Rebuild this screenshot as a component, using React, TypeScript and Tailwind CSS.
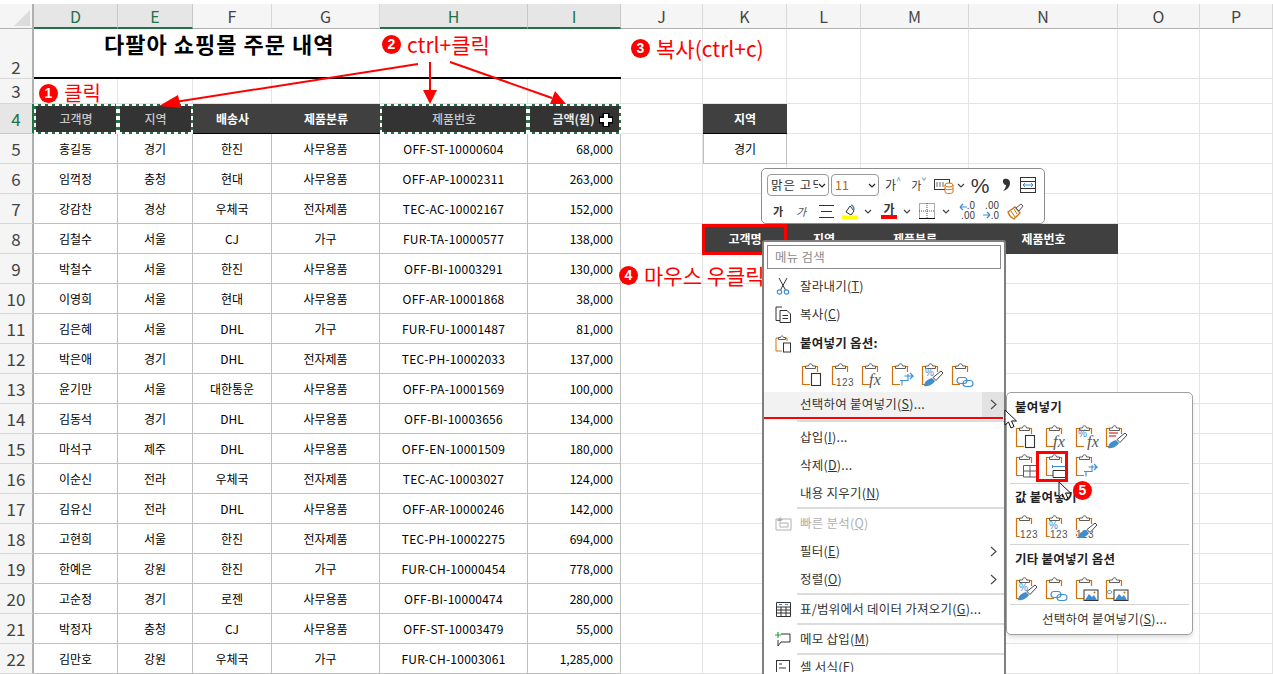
import React from "react";

const DATA = [
  ["홍길동","경기","한진","사무용품","OFF-ST-10000604","68,000"],
  ["임꺽정","충청","현대","사무용품","OFF-AP-10002311","263,000"],
  ["강감찬","경상","우체국","전자제품","TEC-AC-10002167","152,000"],
  ["김철수","서울","CJ","가구","FUR-TA-10000577","138,000"],
  ["박철수","서울","한진","사무용품","OFF-BI-10003291","130,000"],
  ["이영희","서울","현대","사무용품","OFF-AR-10001868","38,000"],
  ["김은혜","서울","DHL","가구","FUR-FU-10001487","81,000"],
  ["박은애","경기","DHL","전자제품","TEC-PH-10002033","137,000"],
  ["윤기만","서울","대한통운","사무용품","OFF-PA-10001569","100,000"],
  ["김동석","경기","DHL","사무용품","OFF-BI-10003656","134,000"],
  ["마석구","제주","DHL","사무용품","OFF-EN-10001509","180,000"],
  ["이순신","전라","우체국","전자제품","TEC-AC-10003027","124,000"],
  ["김유신","전라","DHL","사무용품","OFF-AR-10000246","142,000"],
  ["고현희","서울","한진","전자제품","TEC-PH-10002275","694,000"],
  ["한예은","강원","한진","가구","FUR-CH-10000454","778,000"],
  ["고순정","경기","로젠","사무용품","OFF-BI-10000474","280,000"],
  ["박정자","충청","CJ","사무용품","OFF-ST-10003479","55,000"],
  ["김만호","강원","우체국","가구","FUR-CH-10003061","1,285,000"],
];
const COLS = ["D","E","F","G","H","I","J","K","L","M","N","O","P"];
const SEL = ["D","E","H","I"];

function Ants() {
  return (
    <>
      <span className="absolute -left-[2px] -right-[2px] -top-[2px] h-[2px] z-10 bg-[repeating-linear-gradient(90deg,#ffffff_0_4px,transparent_4px_7px)]" />
      <span className="absolute -left-[2px] -right-[2px] -bottom-[2px] h-[2px] z-10 bg-[repeating-linear-gradient(90deg,#ffffff_0_4px,transparent_4px_7px)]" />
      <span className="absolute -top-[2px] -bottom-[2px] -left-[2px] w-[2px] z-10 bg-[repeating-linear-gradient(0deg,#ffffff_0_4px,transparent_4px_7px)]" />
      <span className="absolute -top-[2px] -bottom-[2px] -right-[2px] w-[2px] z-10 bg-[repeating-linear-gradient(0deg,#ffffff_0_4px,transparent_4px_7px)]" />
    </>
  );
}

function ColHead({ c }: { c: string }) {
  const s = SEL.includes(c);
  return (
    <div className={s
      ? "flex items-center justify-center bg-[#e6e6e6] border-r border-[#c8c8c8] border-b-2 border-b-[#217346] text-[#217346] text-[16px]"
      : "flex items-center justify-center bg-[#f5f5f5] border-r border-[#d8d8d8] border-b border-b-[#b0b0b0] text-[#444] text-[16px]"}>{c}</div>
  );
}

function RowHead({ n, align }: { n: number; align?: string }) {
  const s = n === 4;
  return (
    <div className={`flex ${align || "items-center"} justify-center border-r-2 border-b text-[17px] leading-[22px] ${s ? "bg-[#e6e6e6] text-[#217346] border-r-[#217346] border-b-[#c8c8c8]" : "bg-[#f5f5f5] text-[#444] border-r-[#b0b0b0] border-b-[#d8d8d8]"}`}>{n}</div>
  );
}

const Grid = () => <div className="border-r border-b border-[#e4e4e4]" />;

function Sheet() {
  const rows: React.ReactNode[] = [];
  rows.push(
    <React.Fragment key="r2">
      <RowHead n={2} align="items-end" />
      <div className="col-span-6 border-b-2 border-black flex items-start pl-[70px] text-[22px] tracking-[1px] font-bold text-black leading-[29px] whitespace-nowrap">다팔아 쇼핑몰 주문 내역</div>
      {COLS.slice(6).map((c) => <Grid key={c} />)}
    </React.Fragment>
  );
  rows.push(
    <React.Fragment key="r3">
      <RowHead n={3} />
      {COLS.map((c) => <Grid key={c} />)}
    </React.Fragment>
  );
  const h4 = ["고객명","지역","배송사","제품분류","제품번호","금액(원)"];
  rows.push(
    <React.Fragment key="r4">
      <RowHead n={4} />
      {h4.map((t, i) => {
        const s = SEL.includes(COLS[i]);
        return (
          <div key={t} className={`relative flex items-center justify-center text-[12px] ${s ? `bg-[#333333] border-2 border-[#217346] ${i === 5 ? "text-[#e8e8e8] font-bold pr-[2px]" : "text-[#c8c8c8] font-medium"}` : "bg-[#404040] text-white border-b border-black font-bold"}`}>
            {t}
            {s && <Ants />}
          </div>
        );
      })}
      <Grid /><div className="bg-[#404040] text-white text-[12px] font-bold flex items-center justify-center border-b border-black">지역</div><Grid /><Grid /><Grid /><Grid /><Grid />
    </React.Fragment>
  );
  DATA.forEach((r, idx) => {
    const n = idx + 5;
    rows.push(
      <React.Fragment key={n}>
        <RowHead n={n} />
        {r.map((t, i) => (
          <div key={i} className={`flex items-center whitespace-nowrap border-r border-b border-[#bfbfbf] text-[12px] text-black ${i === 5 ? "justify-end pr-[7px]" : "justify-center"} ${i === 4 ? "tracking-[0.25px]" : ""}`}>{t}</div>
        ))}
        <Grid />
        {n === 5 ? (
          <>
            <div className="flex items-center justify-center border-x border-b border-[#bfbfbf] text-[12px] text-black">경기</div>
            <Grid /><Grid /><Grid />
          </>
        ) : n === 8 ? (
          <>
            <div className="flex items-center justify-center bg-[#404040] text-white text-[12px] font-bold">고객명</div>
            <div className="flex items-center justify-center bg-[#404040] text-white text-[12px] font-bold">지역</div>
            <div className="flex items-center justify-center bg-[#404040] text-white text-[12px] font-bold">제품분류</div>
            <div className="flex items-center justify-center bg-[#404040] text-white text-[12px] font-bold">제품번호</div>
          </>
        ) : (
          <><Grid /><Grid /><Grid /><Grid /></>
        )}
        <Grid /><Grid />
      </React.Fragment>
    );
  });
  return (
    <div className="grid grid-cols-[34px_84px_75px_79px_108px_148px_93px_82px_84px_74px_108px_149px_82px_73px] grid-rows-[4px_25px_50px_25px_30px_repeat(18,30px)] w-[1273px] h-[674px] overflow-hidden bg-white">
      <div className="col-span-14 bg-white" />
      <div className="relative bg-[#f5f5f5] border-r-2 border-b border-r-[#b0b0b0] border-b-[#b0b0b0]">
        <span className="absolute right-[2px] bottom-[2px] w-0 h-0 border-l-[16px] border-l-transparent border-b-[16px] border-b-[#dcdcdc]" />
      </div>
      {COLS.map((c) => <ColHead key={c} c={c} />)}
      {rows}
    </div>
  );
}

const OR = "#d2700f";
const GR = "#5c5c5c";
const BL = "#3f8fd0";

function Clip({ children }: { children?: React.ReactNode }) {
  return (
    <svg width="24" height="26" viewBox="0 0 24 26" fill="none" className="block">
      <path d="M5.5 4.5H1.5V22.5H9" stroke={OR} strokeWidth="1.2" />
      <path d="M14 4.5H16.5V10" stroke={OR} strokeWidth="1.2" />
      <path d="M4.5 6.5V4H7.5C7.5 1 11.5 1 11.5 4H14.5V6.5Z" stroke={GR} strokeWidth="1" fill="#fff" />
      {children}
    </svg>
  );
}
const PDoc = () => <rect x="10.5" y="11.5" width="9" height="12" fill="#fff" stroke="#333" strokeWidth="1.1" />;
const P123 = ({ x = 5 }: { x?: number }) => <text x={x} y="24" fontSize="10" fill="#555" fontFamily="'Liberation Sans',sans-serif" letterSpacing="0.5" paintOrder="stroke" stroke="#fff" strokeWidth="2">123</text>;
const PFx = ({ x = 8 }: { x?: number }) => <text x={x} y="23" fontSize="16" fill="#555" fontStyle="italic" fontFamily="'Liberation Serif',serif">fx</text>;
const PPct = ({ x = 4, y = 14 }: { x?: number; y?: number }) => <text x={x} y={y} fontSize="10" fill={BL} fontFamily="'Liberation Sans',sans-serif">%</text>;
const PArrow = () => <path d="M9 18.5H17V12M13.5 14H22L19 11M22 14L19 17M11 18.5V23.5" stroke={BL} strokeWidth="1.1" fill="none" />;
const PBrush = () => (
  <g>
    <path d="M3 24C4 18 8 17 11 16L14 19C12 22 8 25 3 24Z" fill={BL} />
    <path d="M12 15.5L20 9L22 11L15 18.5Z" fill="#fff" stroke="#444" strokeWidth="1" />
  </g>
);
const PLink = () => (
  <g stroke={BL} strokeWidth="1.1" fill="none">
    <rect x="6" y="15.5" width="10" height="6" rx="3" fill="#fff" />
    <rect x="12" y="18.5" width="10" height="6" rx="3" />
  </g>
);
const PGrid = () => <path d="M8.5 12.5H21.5V24H8.5ZM15 12.5V24M8.5 18H21.5" stroke={GR} strokeWidth="1" fill="#fff" />;
const PWidth = () => (
  <g fill="#fff" stroke="#333" strokeWidth="1">
    <path d="M8 17.5H21V24.5H8Z" />
    <path d="M7.5 12V15M21.5 12V15M7.5 13.5H21.5" stroke={BL} />
  </g>
);
const PImg = () => (
  <g>
    <rect x="9" y="14" width="14" height="10.5" fill="#fff" stroke="#333" strokeWidth="1" />
    <path d="M10 24L14 18L17 21L19 19L22 24Z" fill={BL} />
    <circle cx="19.5" cy="16.5" r="1" fill={OR} />
  </g>
);

function Row({ children, className }: { children: React.ReactNode; className?: string }) {
  return <div className={`flex items-center ${className || ""}`}>{children}</div>;
}

function Cell({ children, w }: { children: React.ReactNode; w: string }) {
  return <div className={`flex justify-center items-center ${w}`}>{children}</div>;
}

const Chev = ({ big }: { big?: boolean }) => (
  <svg width="8" height="5" viewBox="0 0 8 5" fill="none" className="block shrink-0"><path d="M1 1L4 4L7 1" stroke={big ? "#222" : "#444"} strokeWidth="1.2" /></svg>
);

function Toolbar() {
  return (
    <div className="absolute left-[761px] top-[168px] w-[284px] h-[56px] bg-white border border-[#8c8c8c] rounded-[5px] z-20 pl-[5px] pt-[5px] text-[12px] text-[#333]">
      <Row className="h-[22px]">
        <div className="w-[62px] h-[22px] border border-[#9a9a9a] rounded-[4px] flex items-center pl-[3px] justify-between pr-[2px] overflow-hidden">
          <span className="text-[12.5px] tracking-[1px] whitespace-nowrap overflow-hidden w-[47px]">맑은 고딕</span><Chev big />
        </div>
        <div className="ml-[2px] w-[48px] h-[22px] border border-[#9a9a9a] rounded-[4px] flex items-center pl-[3px] justify-between pr-[2px] text-[#b86a10]">
          <span className="text-[12.5px]">11</span><Chev big />
        </div>
        <Cell w="w-[26px] ml-[1px]"><span className="text-[12px] flex items-start">가<span className="text-[#3f8fd0] text-[9px] leading-[10px]">^</span></span></Cell>
        <Cell w="w-[26px]"><span className="text-[11px] flex items-start">가<span className="text-[#3f8fd0] text-[9px] leading-[10px]">ˇ</span></span></Cell>
        <Cell w="w-[24px]">
          <svg width="20" height="18" viewBox="0 0 20 18" fill="none">
            <rect x="0.5" y="3.5" width="15" height="10" stroke="#333" />
            <path d="M3 6V11M6 6V11M9 6V11" stroke="#666" />
            <path d="M11 9V16C11 18 19 18 19 16V9M11 12.5C11 14 19 14 19 12.5" stroke={OR} fill="#fff" />
            <ellipse cx="15" cy="9" rx="4" ry="2" fill="#fff" stroke={OR} />
          </svg>
        </Cell>
        <Cell w="w-[10px]"><Chev /></Cell>
        <Cell w="w-[28px]"><span className="text-[21px] leading-none text-[#333] font-['Liberation_Sans']">%</span></Cell>
        <Cell w="w-[24px]">
          <svg width="10" height="14" viewBox="0 0 10 14" fill="none"><path d="M3 1C7 0 9 2 9 5C9 9 6 12 2 13C4 11 5 9 5 7C2 7 1 2 3 1Z" fill="#333" /></svg>
        </Cell>
        <Cell w="w-[20px]">
          <svg width="16" height="16" viewBox="0 0 16 16" fill="none">
            <rect x="0.5" y="0.5" width="15" height="15" stroke="#333" />
            <path d="M0 4.5H16M0 11.5H16" stroke="#333" />
            <path d="M3 8H13M3 8L5 6M3 8L5 10M13 8L11 6M13 8L11 10" stroke={BL} />
          </svg>
        </Cell>
      </Row>
      <Row className="h-[26px] mt-[2px]">
        <Cell w="w-[22px]"><span className="font-bold text-[11px]">가</span></Cell>
        <Cell w="w-[24px]"><span className="italic text-[11px] text-[#555]">가</span></Cell>
        <Cell w="w-[26px]">
          <svg width="15" height="15" viewBox="0 0 15 15" fill="none"><path d="M0 1.5H15M2 7.5H13M0 13.5H15" stroke="#333" /></svg>
        </Cell>
        <Cell w="w-[20px] ml-[1px]">
          <svg width="16" height="16" viewBox="0 0 16 16" fill="none">
            <path d="M4 9L8 3L12 8L9 12Z" stroke="#333" fill="#fff" />
            <path d="M9 2C12 3 12 6 12 7" stroke={BL} strokeWidth="1.5" />
            <rect x="0" y="12.5" width="16" height="3.5" fill="#ffff00" />
          </svg>
        </Cell>
        <Cell w="w-[16px]"><Chev /></Cell>
        <Cell w="w-[26px]">
          <div className="flex flex-col items-center w-[16px]">
            <span className="text-[12px] font-bold leading-[12px] text-[#333]">가</span>
            <span className="w-[16px] h-[4px] bg-[#ff0000]" />
          </div>
        </Cell>
        <Cell w="w-[10px]"><Chev /></Cell>
        <Cell w="w-[30px]">
          <svg width="16" height="16" viewBox="0 0 16 16" fill="none">
            <path d="M0.5 0.5H15.5V15.5H0.5ZM8 0V16M0 8H16" stroke="#555" strokeDasharray="1 1" />
            <path d="M0 15.5H16" stroke="#111" />
          </svg>
        </Cell>
        <Cell w="w-[8px]"><Chev /></Cell>
        <Cell w="w-[24px] ml-[5px]">
          <div className="relative w-[16px] h-[18px]">
            <svg width="16" height="18" viewBox="0 0 16 18" fill="none"><path d="M1 5H8M1 5L4 2M1 5L4 8" stroke={BL} strokeWidth="1.2" /></svg>
            <span className="absolute right-0 top-[-2px] text-[10px] leading-[10px] text-[#444]">.0</span>
            <span className="absolute right-0 top-[8px] text-[10px] leading-[10px] text-[#444]">.00</span>
          </div>
        </Cell>
        <Cell w="w-[24px]">
          <div className="relative w-[16px] h-[18px]">
            <svg width="16" height="18" viewBox="0 0 16 18" fill="none"><path d="M0 13H7M7 13L4 10M7 13L4 16" stroke={BL} strokeWidth="1.2" /></svg>
            <span className="absolute right-0 top-[-2px] text-[10px] leading-[10px] text-[#444]">.00</span>
            <span className="absolute right-0 top-[8px] text-[10px] leading-[10px] text-[#444]">.0</span>
          </div>
        </Cell>
        <Cell w="w-[24px]">
          <svg width="17" height="17" viewBox="0 0 17 17" fill="none">
            <path d="M1 9L8 4L13 10L7 16C5 15 2 12 1 9Z" stroke={OR} strokeWidth="1.3" fill="#fff" />
            <path d="M4 8L8 14M7 6L10 11" stroke={OR} />
            <path d="M9 5L14 1L16 3L12 8Z" stroke="#555" fill="#fff" />
          </svg>
        </Cell>
      </Row>
    </div>
  );
}

function Item({ icon, label, key2, tail, arrow, disabled, h = "h-[28px]", hover }: { icon?: React.ReactNode; label: string; key2: string; tail?: string; arrow?: boolean; disabled?: boolean; h?: string; hover?: boolean }) {
  return (
    <div className={`flex items-center shrink-0 ${h} ${hover ? "bg-[#f2f2f2]" : ""} ${disabled ? "text-[#b0b0b0]" : "text-[#333]"}`}>
      <div className="w-[36px] flex justify-center pl-[2px]">{icon}</div>
      <span className="whitespace-nowrap">{label}(<u>{key2}</u>){tail}</span>
      {arrow && (
        <div className={`ml-auto w-[22px] self-stretch flex items-center justify-center ${hover ? "bg-[#e2e2e2]" : ""}`}>
          <svg width="7" height="11" viewBox="0 0 7 11" fill="none"><path d="M1 1L6 5.5L1 10" stroke="#444" strokeWidth="1.1" /></svg>
        </div>
      )}
    </div>
  );
}

const Sep = () => <div className="shrink-0 h-[2px] ml-[33px] bg-[#dcdcdc]" />;

function Menu() {
  return (
    <div className="absolute left-[762px] top-[240px] w-[244px] h-[434px] bg-white border-x-2 border-t-2 border-[#7f7f7f] rounded-t-[3px] z-20 flex flex-col text-[12.5px] tracking-[0.25px] overflow-hidden">
      <div className="mx-[3px] mt-[3px] h-[24px] shrink-0 border border-[#8a8a8a] flex items-center pl-[7px] text-[#8a8a8a]">메뉴 검색</div>
      <div className="h-[3px] shrink-0" />
      <Item label="잘라내기" key2="T" icon={
        <svg width="14" height="18" viewBox="0 0 14 18" fill="none"><path d="M3 1L9.5 13M11 1L4.5 13" stroke="#333" /><circle cx="3.5" cy="15" r="2.2" stroke={BL} strokeWidth="1.2" /><circle cx="10.5" cy="15" r="2.2" stroke={BL} strokeWidth="1.2" /></svg>
      } />
      <Item label="복사" key2="C" icon={
        <svg width="17" height="17" viewBox="0 0 17 17" fill="none"><path d="M5 14.5H1V1H7" stroke="#333" /><path d="M5 4.5H12L15.5 8V16.5H5ZM7.5 9.5H13M7.5 12.5H13" stroke="#333" fill="#fff" /></svg>
      } />
      <div className="flex items-center h-[30px] pt-[1px] shrink-0 text-[#222] font-bold">
        <div className="w-[36px] flex justify-center pl-[2px]">
          <svg width="16" height="18" viewBox="0 0 16 18" fill="none"><path d="M4 3H1V16H7" stroke={OR} /><path d="M10 3H12V6" stroke={OR} /><path d="M3.5 4.5V2.5H5.5C5.5 0.5 8.5 0.5 8.5 2.5H10.5V4.5Z" stroke={GR} /><rect x="8.5" y="8" width="7" height="9" stroke="#333" fill="#fff" /></svg>
        </div>
        <span>붙여넣기 옵션:</span>
      </div>
      <div className="flex items-center h-[34px] shrink-0 pl-[37px] gap-[6px]">
        <Clip><PDoc /></Clip>
        <Clip><P123 /></Clip>
        <Clip><PFx /></Clip>
        <Clip><PArrow /></Clip>
        <Clip><PPct /><PBrush /></Clip>
        <Clip><PLink /></Clip>
      </div>
      <Item h="h-[25px]" hover arrow label="선택하여 붙여넣기" key2="S" tail="..." />
      <div className="h-[6px] shrink-0 flex items-end pb-[1px]"><div className="h-[2px] ml-[33px] w-full bg-[#dcdcdc]" /></div>
      <Item label="삽입" key2="I" tail="..." />
      <Item label="삭제" key2="D" tail="..." />
      <Item label="내용 지우기" key2="N" />
      <Sep />
      <Item disabled label="빠른 분석" key2="Q" icon={
        <svg width="17" height="15" viewBox="0 0 17 15" fill="none"><path d="M1 3H16V14H1ZM5 7H13V11H5Z" stroke="#b0b0b0" /><path d="M6 0L2 5H5L3 8L8 3H5Z" fill="#aaa" /></svg>
      } />
      <Item arrow label="필터" key2="E" />
      <Item arrow label="정렬" key2="O" />
      <Sep />
      <Item label="표/범위에서 데이터 가져오기" key2="G" tail="..." icon={
        <svg width="15" height="15" viewBox="0 0 15 15" fill="none"><path d="M0.5 0.5H14.5V14.5H0.5ZM0.5 5H14.5M0.5 8H14.5M0.5 11H14.5M5 5V14.5M10 5V14.5" stroke="#333" /><path d="M3 2.5H6M9 2.5H12" stroke={BL} /></svg>
      } />
      <Sep />
      <Item label="메모 삽입" key2="M" icon={
        <svg width="16" height="15" viewBox="0 0 16 15" fill="none"><path d="M6 2H15V10H6L3 14V8" stroke="#333" /><path d="M3 0V6M0 3H6" stroke="#2f9e44" strokeWidth="1.2" /></svg>
      } />
      <Sep />
      <div className="flex items-start h-[17px] shrink-0 text-[#333] overflow-hidden">
        <div className="w-[36px] flex justify-center pl-[2px] pt-[5px]">
          <svg width="14" height="15" viewBox="0 0 14 15" fill="none"><rect x="0.5" y="0.5" width="13" height="14" stroke="#333" /><path d="M3 4H6M3 8H10" stroke="#333" /></svg>
        </div>
        <span className="whitespace-nowrap pt-[3px]">셀 서식(<u>F</u>)</span>
      </div>
      <div className="absolute left-[-2px] top-[175px] w-[241px] h-[2px] bg-[#ff0000]" />
    </div>
  );
}

function SubSep() {
  return <div className="h-[1px] bg-[#d4d4d4] mx-[2px] shrink-0" />;
}

function SubMenu() {
  return (
    <div className="absolute left-[1006px] top-[392px] w-[187px] h-[243px] bg-white border border-[#a0a0a0] rounded-[5px] shadow-md z-20 flex flex-col px-[1px] text-[12.5px] text-[#222] tracking-[0.25px]">
      <div className="h-[29px] shrink-0 flex items-center pl-[7px] font-bold">붙여넣기</div>
      <div className="h-[29px] shrink-0 flex items-center pl-[7px] gap-[6px]">
        <Clip><PDoc /></Clip><Clip><PFx /></Clip><Clip><PPct x={3} y={13} /><PFx x={12} /></Clip><Clip><path d="M4 9H13M4 12H11" stroke="#c00" /><PBrush /></Clip>
      </div>
      <div className="h-[30px] shrink-0 flex items-center pl-[7px] gap-[6px]">
        <Clip><PGrid /></Clip>
        <Clip><PWidth /></Clip>
        <Clip><PArrow /></Clip>
      </div>
      <div className="h-[2px] shrink-0 mt-[2px]"><SubSep /></div>
      <div className="h-[24px] shrink-0 flex items-center pl-[7px] font-bold">값 붙여넣기</div>
      <div className="h-[35px] shrink-0 flex items-center pl-[7px] gap-[6px]">
        <Clip><P123 /></Clip><Clip><PPct y={15} /><P123 /></Clip><Clip><P123 x={1} /><PBrush /></Clip>
      </div>
      <SubSep />
      <div className="h-[28px] shrink-0 flex items-center pl-[7px] font-bold">기타 붙여넣기 옵션</div>
      <div className="h-[31px] shrink-0 flex items-center pl-[7px] gap-[6px]">
        <Clip><PPct y={15} /><PBrush /></Clip><Clip><PLink /></Clip><Clip><PImg /></Clip><Clip><path d="M2 16C3 14 6 14 7 16C6 18 3 18 2 16" stroke={BL} /><PImg /></Clip>
      </div>
      <SubSep />
      <div className="flex-1 flex items-center justify-center pl-[10px] text-[#333]"><span>선택하여 붙여넣기(<u>S</u>)...</span></div>
      <div className="absolute left-[29px] top-[58px] w-[32px] h-[31px] border-[3px] border-[#ff0000]" />
    </div>
  );
}

function Num({ n }: { n: number }) {
  return <span className="inline-flex w-[19px] h-[19px] rounded-full bg-[#ff0000] text-white items-center justify-center text-[14px] font-bold font-['Liberation_Sans'] shrink-0">{n}</span>;
}

const Ann = ({ n, text, cls }: { n: number; text: string; cls: string }) => (
  <div className={`absolute flex items-center gap-[6px] text-[#ff0000] whitespace-nowrap z-30 ${cls}`}><Num n={n} /><span>{text}</span></div>
);

function Cursor({ cls }: { cls: string }) {
  return (
    <svg width="14" height="20" viewBox="0 0 14 20" className={`absolute z-40 ${cls}`}><path d="M1 1V16L4.5 13L7 19L10 17.5L7.5 12H12.5Z" fill="#fff" stroke="#111" strokeWidth="1" /></svg>
  );
}

function Overlays() {
  return (
    <>
      <svg width="1273" height="674" className="absolute left-0 top-0 pointer-events-none z-20" fill="none">
        <path d="M418 64L175 102" stroke="#ff0000" strokeWidth="2" />
        <path d="M159 106L178 95L181 108Z" fill="#ff0000" />
        <path d="M430 62V90" stroke="#ff0000" strokeWidth="2" />
        <path d="M430 104L423 90H437Z" fill="#ff0000" />
        <path d="M450 62L552 98" stroke="#ff0000" strokeWidth="2" />
        <path d="M566 104L550 104L555 91Z" fill="#ff0000" />
        <path d="M606 113V127M599 120H613" stroke="#000" strokeWidth="7" />
        <path d="M606 114V126M600 120H612" stroke="#fff" strokeWidth="4" />
      </svg>
      <Ann n={1} text="클릭" cls="left-[39px] top-[79px] text-[20px] leading-[28px]" />
      <Ann n={2} text="ctrl+클릭" cls="left-[382px] top-[28px] text-[21px] leading-[32px]" />
      <Ann n={3} text="복사(ctrl+c)" cls="left-[631px] top-[32px] text-[21px] leading-[32px]" />
      <Ann n={4} text="마우스 우클릭" cls="left-[619px] top-[260px] text-[21px] leading-[30px]" />
      <div className="absolute left-[702px] top-[224px] w-[85px] h-[31px] border-[3px] border-[#ff0000] z-10" />
      <Toolbar />
      <Menu />
      <SubMenu />
      <div className="absolute left-[1073px] top-[476px] z-30"><Num n={5} /></div>
      <Cursor cls="left-[1004px] top-[409px]" />
      <Cursor cls="left-[1058px] top-[481px]" />
    </>
  );
}

export default function App() {
  return (
    <div className="relative w-[1273px] h-[674px] overflow-hidden font-['Noto_Sans_CJK_KR','Noto_Sans',sans-serif]">
      <Sheet />
      <Overlays />
    </div>
  );
}
